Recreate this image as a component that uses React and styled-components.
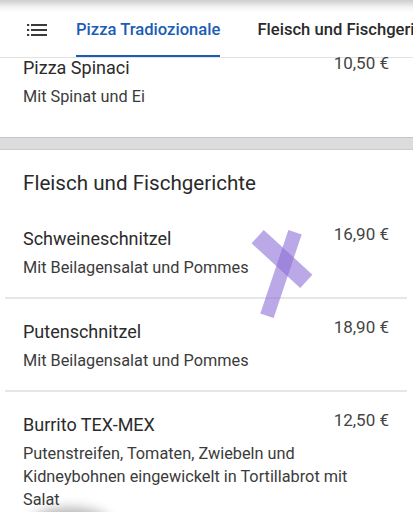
import React from "react"
import styled, { createGlobalStyle } from "styled-components"

const GlobalStyle = createGlobalStyle`
  html, body {
    margin: 0;
    padding: 0;
    background: #ffffff;
    font-family: Roboto, "Noto Sans", Arial, sans-serif;
    -webkit-font-smoothing: antialiased;
  }
`

const Page = styled.div`
  position: relative;
  width: 413px;
  height: 512px;
  overflow: hidden;
  background: #ffffff;
`

const TabBar = styled.nav`
  display: flex;
  align-items: stretch;
  height: 58px;
  box-sizing: border-box;
  overflow: hidden;
  border-bottom: 1px solid #e2e2e2;
  background: linear-gradient(#cdcdcd 0px, #f2f2f2 7px, #ffffff 12px);
  white-space: nowrap;
`

const MenuButton = styled.div`
  display: flex;
  flex-shrink: 0;
  align-items: center;
  justify-content: center;
  width: 76px;
  padding: 2px 2px 0 0;
  box-sizing: border-box;
`

const Tab = styled.div`
  position: relative;
  display: flex;
  flex-shrink: 0;
  align-items: center;
  padding-top: 2px;
  margin-right: 37px;
  font-size: 16.6px;
  font-weight: 500;
  color: ${(p) => (p.active ? "#1b5cb6" : "#2a2a2a")};

  &::after {
    content: "";
    display: ${(p) => (p.active ? "block" : "none")};
    position: absolute;
    left: 0;
    right: 0;
    bottom: -1px;
    height: 3px;
    background: #1b5cb6;
  }
`

// sections of the menu; the first one is scrolled partly under the tabs
const Section = styled.section`
  padding: ${(p) => p.pad || "0"};
  margin-top: ${(p) => (p.scrolled ? "-2px" : "0")};
`

const SectionTitle = styled.h2`
  margin: 0 0 9px 0;
  padding: 0 23px;
  font-size: 20.6px;
  font-weight: 400;
  line-height: 28px;
  color: #2a2a2a;
`

const Band = styled.div`
  height: 11px;
  background: #dcdcdf;
  border-top: 1px solid #c4c4c6;
  border-bottom: 1px solid #cbcbcd;
`

const Item = styled.div`
  display: flex;
  flex-direction: column;
  margin: 0 6px 0 5px;
  padding: ${(p) => (p.first ? "0" : "21px")} 18px 18px 18px;
  border-bottom: ${(p) => (p.last ? "none" : "2px solid #e6e6e6")};
`

const ItemHead = styled.div`
  display: flex;
  align-items: flex-start;
  justify-content: space-between;
  margin-bottom: 5px;
`

const ItemName = styled.div`
  font-size: 18px;
  line-height: 24px;
  color: #2b2b2b;
`

const ItemDesc = styled.div`
  font-size: 16.3px;
  line-height: 23px;
  color: #3b3b3b;
  max-width: 352px;
`

const Price = styled.div`
  flex-shrink: 0;
  margin: -5px 0 0 12px;
  font-size: 17px;
  line-height: 24px;
  color: #444444;
`

// purple tape mark lying over the list
const Stroke = styled.div`
  position: absolute;
  left: ${(p) => p.x}px;
  top: ${(p) => p.y}px;
  width: ${(p) => p.w}px;
  height: ${(p) => p.h}px;
  background: rgba(142, 110, 214, 0.6);
  transform: translate(-50%, -50%) rotate(${(p) => p.angle}deg);
`

const FabShadow = styled.div`
  position: absolute;
  left: 32px;
  bottom: -22px;
  width: 76px;
  height: 26px;
  border-radius: 50%;
  background: rgba(0, 0, 0, 0.3);
  filter: blur(6px);
`

const ListIcon = () => (
  <svg width="20" height="12" viewBox="0 0 20 12">
    <g fill="#3a3a3a">
      <rect x="0" y="0" width="2.2" height="2" />
      <rect x="0" y="5" width="2.2" height="2" />
      <rect x="0" y="10" width="2.2" height="2" />
      <rect x="4" y="0" width="16" height="2" />
      <rect x="4" y="5" width="16" height="2" />
      <rect x="4" y="10" width="16" height="2" />
    </g>
  </svg>
)

const meat = [
  { name: "Schweineschnitzel", desc: "Mit Beilagensalat und Pommes", price: "16,90 €" },
  { name: "Putenschnitzel", desc: "Mit Beilagensalat und Pommes", price: "18,90 €" },
  {
    name: "Burrito TEX-MEX",
    desc: "Putenstreifen, Tomaten, Zwiebeln und Kidneybohnen eingewickelt in Tortillabrot mit Salat",
    price: "12,50 €",
  },
]

const MenuItem = ({ name, desc, price, first, last }) => (
  <Item first={first} last={last}>
    <ItemHead>
      <ItemName>{name}</ItemName>
      <Price>{price}</Price>
    </ItemHead>
    <ItemDesc>{desc}</ItemDesc>
  </Item>
)

export default function App() {
  return (
    <Page>
      <GlobalStyle />
      <TabBar>
        <MenuButton>
          <ListIcon />
        </MenuButton>
        <Tab active>Pizza Tradiozionale</Tab>
        <Tab>Fleisch und Fischgerichte</Tab>
      </TabBar>

      <Section scrolled pad="0 0 11px 0">
        <MenuItem first last name="Pizza Spinaci" desc="Mit Spinat und Ei" price="10,50 €" />
      </Section>

      <Band />

      <Section pad="19px 0 0 0">
        <SectionTitle>Fleisch und Fischgerichte</SectionTitle>
        {meat.map((m, i) => (
          <MenuItem key={m.name} last={i === meat.length - 1} {...m} />
        ))}
      </Section>

      <Stroke x={282} y={259} w={66} h={18} angle={42.5} />
      <Stroke x={281} y={274} w={14} h={88} angle={18.6} />
      <FabShadow />
    </Page>
  )
}
